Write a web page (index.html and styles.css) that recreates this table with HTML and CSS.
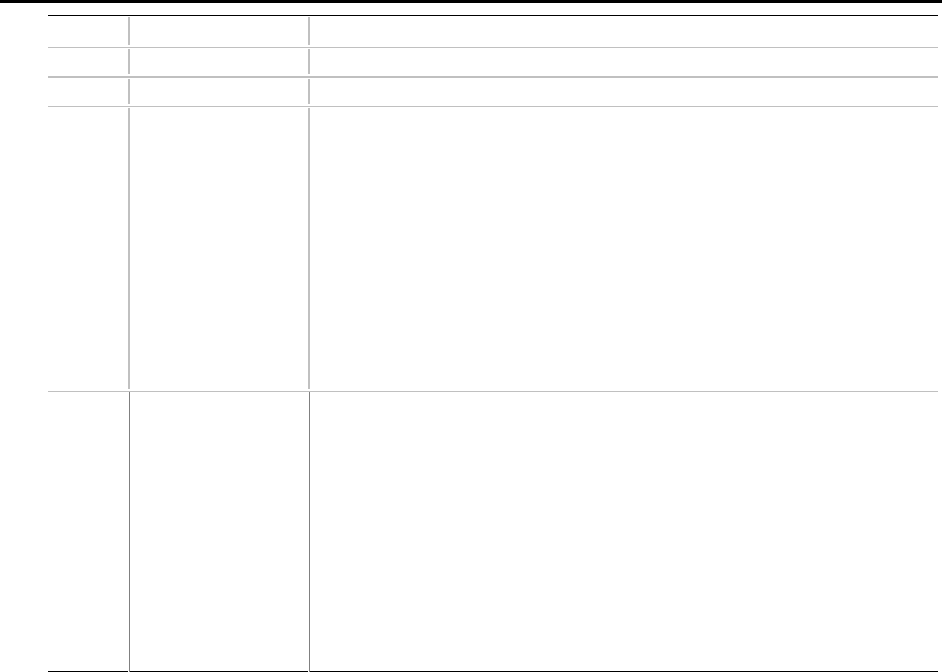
FILE: index.html
```html
<!DOCTYPE html>
<html lang="en">
<head>
<meta charset="utf-8">
<title>Table</title>
<link rel="stylesheet" href="styles.css">
</head>
<body>
<div class="topbar"></div>
<div class="table">
  <div class="row r1"><div class="cell c1"></div><div class="sep"></div><div class="cell c2"></div><div class="sep"></div><div class="cell c3"></div></div>
  <div class="row r2"><div class="cell c1"></div><div class="sep"></div><div class="cell c2"></div><div class="sep"></div><div class="cell c3"></div></div>
  <div class="row r3"><div class="cell c1"></div><div class="sep"></div><div class="cell c2"></div><div class="sep"></div><div class="cell c3"></div></div>
  <div class="row r4"><div class="cell c1"></div><div class="sep"></div><div class="cell c2"></div><div class="sep"></div><div class="cell c3"></div></div>
  <div class="row r5"><div class="cell c1"></div><div class="sep dark"></div><div class="cell c2"></div><div class="sep dark"></div><div class="cell c3"></div></div>
</div>
</body>
</html>
```
FILE: styles.css
```css
html, body {
  margin: 0;
  padding: 0;
  background: #ffffff;
  font-family: "Liberation Sans", Arial, sans-serif;
}
body {
  height: 672px;
  overflow: hidden;
}
.topbar {
  height: 3px;
  background: #000000;
}
.table {
  width: 890px;
  margin: 12px 0 0 48px;
  border-top: 1px solid #000000;
}
.row {
  display: flex;
  box-sizing: border-box;
  border-bottom: 1px solid #c0c0c0;
}
.r1 { height: 32px; }
.r2 { height: 30px; border-bottom-width: 2px; }
.r3 { height: 29px; }
.r4 { height: 285px; }
.r5 { height: 280px; border-bottom: none; }
.cell {
  box-sizing: border-box;
}
.c1 { width: 80px; }
.c2 { width: 178px; }
.c3 { flex: 1; }
.sep {
  width: 2px;
  flex: none;
  margin: 1px 0 2px;
  background: #c0c0c0;
}
.sep.dark {
  box-sizing: border-box;
  background: none;
  border-right: 1px solid #808080;
  margin: 0;
}
.r5 .cell {
  border-bottom: 1px solid #000000;
}
```
